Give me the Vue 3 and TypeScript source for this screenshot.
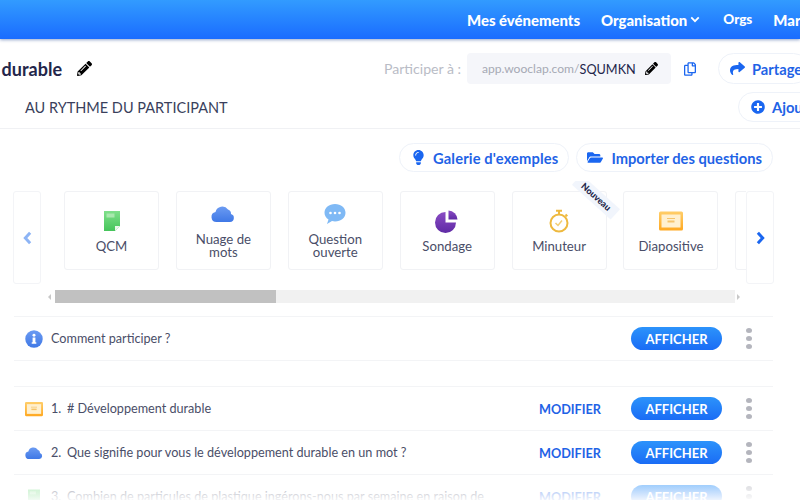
<script setup lang="ts">
interface Card {
  label: string
  icon: string
  isNew?: boolean
}

interface Row {
  icon: string
  text: string
  number?: number
  editable: boolean
}

const pencil =
  'M497.9 142.1l-46.1 46.1c-4.7 4.7-12.3 4.7-17 0l-111-111c-4.7-4.7-4.7-12.3 0-17l46.1-46.1c18.7-18.7 49.1-18.7 67.9 0l60.1 60.1c18.8 18.7 18.8 49.1 0 67.9zM284.2 99.8L21.6 362.4.4 483.9c-2.9 16.4 11.4 30.6 27.8 27.8l121.5-21.3 262.6-262.6c4.7-4.7 4.7-12.3 0-17l-111-111c-4.8-4.7-12.4-4.7-17.1 0zM124.1 339.9c-5.5-5.5-5.5-14.3 0-19.8l154-154c5.5-5.5 14.3-5.5 19.8 0s5.5 14.3 0 19.8l-154 154c-5.5 5.5-14.3 5.5-19.8 0zM88 424h48v36.3l-64.5 11.3-31.1-31.1L51.7 376H88v48z'

const cards: Card[] = [
  { label: 'QCM', icon: 'i-mcq' },
  { label: 'Nuage de mots', icon: 'i-cloud' },
  { label: 'Question ouverte', icon: 'i-bubble' },
  { label: 'Sondage', icon: 'i-poll' },
  { label: 'Minuteur', icon: 'i-timer', isNew: true },
  { label: 'Diapositive', icon: 'i-slide' },
  { label: 'Document', icon: 'i-slide' },
]

const rows: Row[] = [
  { icon: 'i-slide', number: 1, text: '# Développement durable', editable: true },
  { icon: 'i-cloud', number: 2, text: 'Que signifie pour vous le développement durable en un mot ?', editable: true },
  {
    icon: 'i-mcq',
    number: 3,
    text: 'Combien de particules de plastique ingérons-nous par semaine en raison de',
    editable: true,
  },
]
</script>

<template>
  <div class="page">
    <svg class="defs" width="0" height="0" aria-hidden="true">
      <defs>
        <linearGradient id="g-green" x1="0" y1="0" x2="0" y2="1">
          <stop offset="0" stop-color="#7fe08a" />
          <stop offset="1" stop-color="#45c45a" />
        </linearGradient>
        <linearGradient id="g-blue" x1="0" y1="0" x2="0" y2="1">
          <stop offset="0" stop-color="#6b9bf2" />
          <stop offset="1" stop-color="#3f78e6" />
        </linearGradient>
        <linearGradient id="g-purple" x1="0" y1="0" x2="0" y2="1">
          <stop offset="0" stop-color="#8a4cc4" />
          <stop offset="1" stop-color="#5f2aa5" />
        </linearGradient>
        <linearGradient id="g-orange" x1="0" y1="0" x2="0" y2="1">
          <stop offset="0" stop-color="#ffce6a" />
          <stop offset="1" stop-color="#ffa820" />
        </linearGradient>
      </defs>
      <symbol id="i-mcq" viewBox="0 0 24 24">
        <path d="M4 2h16v15L15 22H4z" fill="url(#g-green)" />
        <path d="M15 22v-5h5z" fill="#e9f7ea" />
        <rect x="6.500" y="4.500" width="8" height="4" fill="#a9e8ae" />
      </symbol>
      <symbol id="i-cloud" viewBox="0 0 24 24">
        <path
          d="M5.500 20a5 5 0 0 1-1-9.900A7 7 0 0 1 17 7.500 4.400 4.400 0 0 1 20 12 4.100 4.100 0 0 1 19 20z"
          fill="url(#g-blue)"
        />
      </symbol>
      <symbol id="i-bubble" viewBox="0 0 24 24">
        <path
          d="M12 2c6 0 10.500 3.800 10.500 8.800S18 19.500 12 19.500c-1 0-2-.1-3-.4L4 22l1.500-4.500C3 16 1.500 13.600 1.500 10.800 1.500 5.800 6 2 12 2z"
          fill="#7fb9f5"
        />
        <circle cx="7.500" cy="11" r="1.300" fill="#fff" />
        <circle cx="12" cy="11" r="1.300" fill="#fff" />
        <circle cx="16.500" cy="11" r="1.300" fill="#fff" />
      </symbol>
      <symbol id="i-poll" viewBox="0 0 24 24">
        <path d="M10.500 3v10.500H21A10.500 10.500 0 1 1 10.500 3z" fill="url(#g-purple)" />
        <path d="M13.500 1.500A9.500 9.500 0 0 1 22.500 10.500H13.500z" fill="url(#g-purple)" />
      </symbol>
      <symbol id="i-timer" viewBox="0 0 24 24">
        <g fill="none" stroke="#eeb93f" stroke-width="2">
          <circle cx="12" cy="14" r="8.500" />
          <path d="M9 1.800h6M12 2v3.500M18.500 5.500l1.800 1.800" />
          <path d="M8.500 14l2.500 2.500 4-5" stroke-width="1.500" stroke="#f2cd74" />
        </g>
      </symbol>
      <symbol id="i-slide" viewBox="0 0 24 24">
        <rect x="0" y="2.500" width="24" height="19" rx="1.500" fill="url(#g-orange)" />
        <rect x="2.500" y="5.500" width="19" height="13" fill="#fff0cf" />
        <rect x="8" y="9" width="8" height="1" fill="#f5c46c" />
        <rect x="8.500" y="11.500" width="7" height="2" fill="#f5c46c" />
      </symbol>
    </svg>

    <header class="topbar">
      <nav class="topnav">
        <a>Mes événements</a>
        <a class="with-caret">
          Organisation
          <svg viewBox="0 0 12 8" width="10" height="7">
            <path d="M1.500 1.500 6 6l4.500-4.500" fill="none" stroke="#fff" stroke-width="2.200" />
          </svg>
        </a>
        <a class="small">Orgs</a>
        <a>Marie</a>
      </nav>
    </header>

    <section class="titlebar">
      <div class="title-wrap">
        <h1>Développement durable</h1>
      </div>
      <svg class="title-pencil" viewBox="0 0 512 512" width="15" height="15"><path :d="pencil" /></svg>
      <div class="join">
        <span class="join-label">Participer à :</span>
        <div class="join-url">
          <span class="host">app.wooclap.com/</span><span class="code">SQUMKN</span>
          <svg viewBox="0 0 512 512" width="13" height="13"><path :d="pencil" /></svg>
        </div>
        <svg class="copy" viewBox="0 0 448 512" width="12" height="14">
          <path
            d="M433.941 65.941l-51.882-51.882A48 48 0 0 0 348.118 0H176c-26.51 0-48 21.49-48 48v48H48c-26.51 0-48 21.49-48 48v320c0 26.51 21.49 48 48 48h224c26.51 0 48-21.49 48-48v-48h80c26.51 0 48-21.49 48-48V99.882a48 48 0 0 0-14.059-33.941zM266 464H54a6 6 0 0 1-6-6V150a6 6 0 0 1 6-6h74v224c0 26.51 21.49 48 48 48h96v42a6 6 0 0 1-6 6zm128-96H182a6 6 0 0 1-6-6V54a6 6 0 0 1 6-6h106v88c0 13.255 10.745 24 24 24h88v202a6 6 0 0 1-6 6zm6-256h-64V48h9.632c1.591 0 3.117.632 4.243 1.757l48.368 48.368a6 6 0 0 1 1.757 4.243V112z"
          />
        </svg>
        <button class="pill share">
          <svg viewBox="0 0 512 512" width="15" height="15">
            <path
              d="M503.691 189.836L327.687 37.851C312.281 24.546 288 35.347 288 56.015v80.053C127.371 137.907 0 170.1 0 322.326c0 61.441 39.581 122.309 83.333 154.132 13.653 9.931 33.111-2.533 28.077-18.631C66.066 312.814 132.917 274.316 288 272.085V360c0 20.7 24.3 31.453 39.687 18.164l176.004-152c11.071-9.562 11.086-26.753 0-36.328z"
            />
          </svg>
          Partager
        </button>
      </div>
    </section>

    <section class="modebar">
      <span class="mode">AU RYTHME DU PARTICIPANT</span>
      <button class="pill add">
        <svg viewBox="0 0 512 512" width="14" height="14">
          <path
            d="M256 8C119 8 8 119 8 256s111 248 248 248 248-111 248-248S393 8 256 8zm144 276c0 6.6-5.4 12-12 12h-92v92c0 6.6-5.4 12-12 12h-56c-6.6 0-12-5.4-12-12v-92h-92c-6.6 0-12-5.4-12-12v-56c0-6.6 5.4-12 12-12h92v-92c0-6.6 5.4-12 12-12h56c6.6 0 12 5.4 12 12v92h92c6.6 0 12 5.4 12 12v56z"
          />
        </svg>
        Ajouter
      </button>
    </section>

    <div class="actions">
      <button class="pill action tip">
        <svg viewBox="0 0 352 512" width="11" height="15">
          <path
            d="M96.06 454.35c.01 6.29 1.87 12.45 5.36 17.69l17.09 25.69a31.99 31.99 0 0 0 26.64 14.28h61.71a31.99 31.99 0 0 0 26.64-14.28l17.09-25.69a31.989 31.989 0 0 0 5.36-17.69l.04-38.35H96.01l.05 38.35zM0 176c0 44.37 16.45 84.85 43.56 115.78 16.52 18.85 42.36 58.23 52.21 91.45.04.26.07.52.11.78h160.24c.04-.26.07-.51.11-.78 9.85-33.22 35.69-72.6 52.21-91.45C335.55 260.85 352 220.37 352 176 352 78.61 272.91-.3 175.45 0 73.44.31 0 82.97 0 176zm176-80c-44.11 0-80 35.89-80 80 0 8.84-7.16 16-16 16s-16-7.16-16-16c0-61.76 50.24-112 112-112 8.84 0 16 7.16 16 16s-7.16 16-16 16z"
          />
        </svg>
        Galerie d'exemples
      </button>
      <button class="pill action">
        <svg viewBox="0 0 576 512" width="16" height="15">
          <path
            d="M572.694 292.093L500.27 416.248A63.997 63.997 0 0 1 444.989 448H45.025c-18.523 0-30.064-20.093-20.731-36.093l72.424-124.155A64 64 0 0 1 152 256h399.964c18.523 0 30.064 20.093 20.73 36.093zM152 224h328v-48c0-26.51-21.49-48-48-48H272l-64-64H48C21.49 64 0 85.49 0 112v278.046l69.077-118.418C86.214 242.25 117.989 224 152 224z"
          />
        </svg>
        Importer des questions
      </button>
    </div>

    <div class="carousel">
      <button class="arrow">
        <svg viewBox="0 0 10 16" width="9" height="14">
          <path d="M8 2 2.500 8 8 14" fill="none" stroke="#8db4f5" stroke-width="3.400" />
        </svg>
      </button>
      <div class="track">
        <div v-for="card in cards" :key="card.label" class="card">
          <span v-if="card.isNew" class="ribbon">Nouveau</span>
          <svg class="card-icon" width="24" height="24"><use :href="`#${card.icon}`" /></svg>
          <span class="card-label">{{ card.label }}</span>
        </div>
      </div>
      <button class="arrow">
        <svg viewBox="0 0 10 16" width="9" height="14">
          <path d="M2 2l5.500 6L2 14" fill="none" stroke="#1a66f0" stroke-width="3.400" />
        </svg>
      </button>
    </div>

    <div class="scrollbar">
      <span class="scroll-arrow left"></span>
      <div class="scroll-track"><div class="scroll-thumb"></div></div>
      <span class="scroll-arrow right"></span>
    </div>

    <div class="list">
      <div class="row intro">
        <svg class="row-icon" viewBox="0 0 512 512" width="18" height="18">
          <circle cx="256" cy="256" r="248" fill="url(#g-blue)" />
          <rect x="216" y="212" width="80" height="160" rx="8" fill="#fff" />
          <rect x="190" y="350" width="132" height="40" rx="8" fill="#fff" />
          <circle cx="256" cy="150" r="42" fill="#fff" />
        </svg>
        <span class="row-text">Comment participer ?</span>
        <button class="show">AFFICHER</button>
        <span class="kebab"><i></i><i></i><i></i></span>
      </div>
      <div class="questions">
        <div v-for="row in rows" :key="row.text" class="row">
          <svg class="row-icon" width="18" height="18"><use :href="`#${row.icon}`" /></svg>
          <span class="row-num">{{ row.number }}.</span>
          <span class="row-text">{{ row.text }}</span>
          <a v-if="row.editable" class="edit">MODIFIER</a>
          <button class="show">AFFICHER</button>
          <span class="kebab"><i></i><i></i><i></i></span>
        </div>
      </div>
      <div class="fade"></div>
    </div>
  </div>
</template>

<style>
html,
body {
  margin: 0;
  background: #fff;
  overflow: hidden;
}
</style>

<style scoped>
.page {
  position: relative;
  width: 800px;
  height: 500px;
  overflow: hidden;
  background: #fff;
  font-family: 'Lato', 'Noto Sans', sans-serif;
  color: #3a3f5c;
}

.defs {
  position: absolute;
}

button {
  font-family: inherit;
  cursor: pointer;
}

.topbar {
  height: 39px;
  background: linear-gradient(#329bff, #1a6cff);
  box-shadow: 0 1px 3px rgba(20, 60, 140, 0.45);
  position: relative;
}

.topnav {
  display: flex;
  align-items: center;
  height: 39px;
  padding-left: 467px;
  gap: 21px;
  white-space: nowrap;
  overflow: hidden;
  color: #fff;
  font-size: 14.900px;
  font-weight: 900;
}

.with-caret {
  display: flex;
  align-items: center;
  gap: 3px;
}

.topnav .small {
  font-size: 13.500px;
  margin-left: 2px;
  margin-top: -2px;
}

.titlebar {
  display: flex;
  align-items: center;
  padding: 14px 0 4px;
  white-space: nowrap;
}

.title-wrap {
  width: 62px;
  display: flex;
  justify-content: flex-end;
  flex: none;
}

h1 {
  margin: 0;
  font-size: 18px;
  font-weight: 700;
  color: #23264a;
}

.title-pencil {
  margin-left: 15px;
  flex: none;
}

.join {
  display: flex;
  align-items: center;
  margin-left: 292px;
  flex: none;
}

.join-label {
  width: 83px;
  font-size: 14.100px;
  color: #b9bcc6;
}

.join-url {
  display: flex;
  align-items: center;
  width: 204px;
  height: 31px;
  box-sizing: border-box;
  padding-left: 15px;
  border-radius: 4px;
  background: #f5f6fa;
}

.host {
  color: #a6a9b4;
  font-size: 12.100px;
}

.code {
  color: #23264a;
  font-size: 12.700px;
  margin-right: 9px;
}

.copy {
  margin-left: 13px;
  fill: #1a66f0;
  flex: none;
}

.pill {
  display: inline-flex;
  align-items: center;
  white-space: nowrap;
  background: #fff;
  border: 1px solid #eef2f9;
  border-radius: 16px;
  color: #1f63e6;
  font-weight: 700;
  font-size: 14.700px;
  padding: 0;
}

.pill svg {
  fill: #1a66f0;
  flex: none;
}

.share {
  height: 31px;
  margin-left: 22px;
  padding-left: 11px;
  gap: 7px;
  flex: none;
}

.modebar {
  display: flex;
  align-items: center;
  white-space: nowrap;
  border-bottom: 1px solid #f0f1f4;
  padding: 4px 0 6px 25px;
}

.mode {
  width: 713px;
  flex: none;
  font-size: 14.500px;
}

.add {
  height: 30px;
  padding-left: 12px;
  gap: 7px;
  flex: none;
}

.actions {
  display: flex;
  justify-content: flex-end;
  gap: 7px;
  width: 773px;
  margin-top: 14px;
}

.action {
  height: 29px;
  padding: 0 10px 0 10px;
  gap: 8px;
}

.action.tip {
  padding-left: 13px;
  gap: 9px;
  letter-spacing: 0.15px;
}

.carousel {
  display: flex;
  width: 761px;
  margin: 19px 0 0 13px;
}

.arrow {
  width: 28px;
  height: 93px;
  flex: none;
  display: flex;
  align-items: center;
  justify-content: center;
  background: #fff;
  border: 1px solid #f3f4f7;
  border-radius: 3px;
  padding: 0;
}

.track {
  display: flex;
  flex: 1;
  min-width: 0;
  height: 103px;
  margin-top: -10px;
  gap: 16.900px;
  padding: 10px 0 0 23px;
  box-sizing: border-box;
  overflow: hidden;
  align-items: flex-start;
}

.card {
  position: relative;
  flex: none;
  width: 95px;
  height: 79px;
  box-sizing: border-box;
  display: flex;
  flex-direction: column;
  align-items: center;
  justify-content: center;
  border: 1px solid #f1f2f5;
  border-radius: 3px;
  text-align: center;
  font-size: 13.200px;
  line-height: 13px;
}

.card-icon {
  flex: none;
  margin-bottom: 7px;
}

.card-label {
  width: 84px;
  color: #4a4e68;
}

.ribbon {
  position: absolute;
  top: -2px;
  right: -16px;
  width: 52px;
  height: 14px;
  background: #f1f5fc;
  color: #23264a;
  font-size: 9px;
  font-weight: 900;
  line-height: 14px;
  transform: rotate(42deg);
}

.scrollbar {
  display: flex;
  align-items: center;
  height: 13px;
  width: 698px;
  margin: 6px 0 0 44px;
}

.scroll-arrow {
  width: 11px;
  flex: none;
  display: flex;
  justify-content: center;
}

.scroll-arrow::before {
  content: '';
  border: 3px solid transparent;
}

.scroll-arrow.left::before {
  border-right-color: #c8c8c8;
  margin-left: -3px;
}

.scroll-arrow.right {
  width: 7px;
}

.scroll-arrow.right::before {
  border-left-color: #c8c8c8;
  margin-left: 3px;
}

.scroll-track {
  flex: 1;
  height: 13px;
  background: #f1f1f1;
}

.scroll-thumb {
  width: 221px;
  height: 13px;
  background: #c1c1c1;
}

.list {
  position: relative;
  width: 759px;
  margin: 13px 0 0 14px;
  font-size: 12.650px;
}

.intro {
  border-top: 1px solid #f3f4f6;
}

.questions {
  margin-top: 25px;
  border-top: 1px solid #f3f4f6;
}

.row {
  display: flex;
  align-items: center;
  height: 43px;
  border-bottom: 1px solid #f3f4f6;
  padding: 0 0 0 11px;
  white-space: nowrap;
  color: #4a4e68;
}

.row-icon {
  flex: none;
  margin-right: 8px;
}

.row-num {
  width: 16px;
  flex: none;
}

.row-text {
  flex: 1;
  min-width: 0;
  overflow: hidden;
}

.edit {
  color: #1f63e6;
  font-weight: 700;
  font-size: 12.700px;
  margin: 0 30px 0 10px;
  flex: none;
}

.show {
  flex: none;
  width: 91px;
  height: 23px;
  padding: 0;
  border: none;
  border-radius: 12px;
  background: linear-gradient(#2c93fb, #1a6cf5);
  color: #fff;
  font-size: 13px;
  font-weight: 700;
}

.kebab {
  flex: none;
  display: flex;
  flex-direction: column;
  gap: 3px;
  margin: 0 21px 0 24px;
}

.kebab i {
  display: block;
  width: 6px;
  height: 5px;
  border-radius: 50%;
  background: #b4b5bd;
}

.fade {
  position: absolute;
  left: 0;
  right: 0;
  top: 159px;
  height: 26px;
  background: linear-gradient(rgba(255, 255, 255, 0.3), rgba(255, 255, 255, 0.95));
}
</style>
